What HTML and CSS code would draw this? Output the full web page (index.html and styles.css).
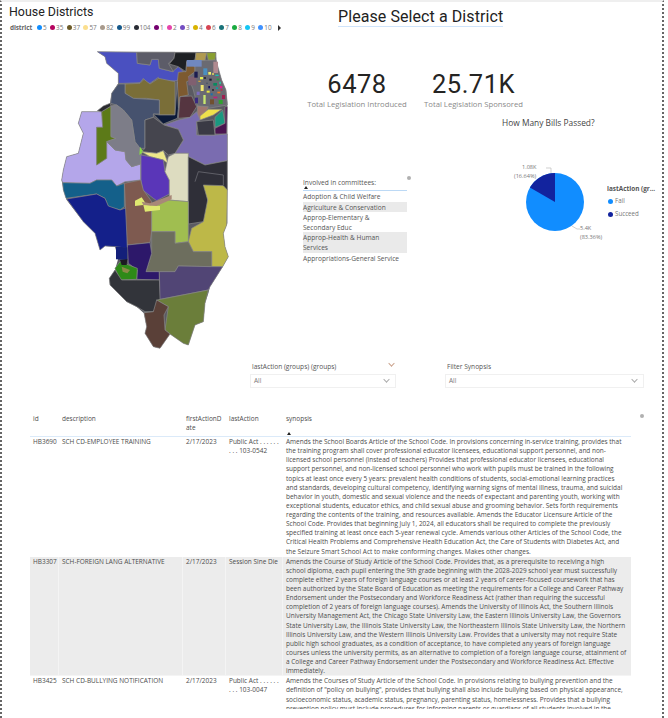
FILE: index.html
```html
<!DOCTYPE html>
<html lang="en">
<head>
<meta charset="utf-8">
<title>House Districts</title>
<link rel="stylesheet" href="styles.css">
</head>
<body>
<div class="report">
  <div class="top">
    <div class="left">
      <h1 class="title">House Districts</h1>
      <div class="legend">
        <b class="legend-name">district</b>
        <span class="lg"><i style="background:#118dff"></i>5</span>
        <span class="lg"><i style="background:#b5045f"></i>35</span>
        <span class="lg"><i style="background:#6b5a28"></i>37</span>
        <span class="lg"><i style="background:#fbdf8e"></i>57</span>
        <span class="lg"><i style="background:#a89a8c"></i>82</span>
        <span class="lg"><i style="background:#15588a"></i>99</span>
        <span class="lg"><i style="background:#2a2d35"></i>104</span>
        <span class="lg"><i style="background:#74006f"></i>1</span>
        <span class="lg"><i style="background:#e645ab"></i>2</span>
        <span class="lg"><i style="background:#744ec2"></i>3</span>
        <span class="lg"><i style="background:#d9b300"></i>4</span>
        <span class="lg"><i style="background:#d64554"></i>6</span>
        <span class="lg"><i style="background:#197278"></i>7</span>
        <span class="lg"><i style="background:#1aab40"></i>8</span>
        <span class="lg"><i style="background:#15c6f4"></i>9</span>
        <span class="lg"><i style="background:#4092ff"></i>10</span>
        <span class="lg-arrow"></span>
      </div>
      <svg class="map" viewBox="0 0 630 960" aria-label="Map of Illinois house districts">
        <polygon fill="#5a5a62" points="172,35 528,36 530,70 545,120 558,150 562,185 562,450 562,550 550,580 555,620 565,650 548,680 510,740 505,760 495,790 490,845 465,855 445,915 430,910 390,882 360,925 340,920 315,880 320,860 312,820 290,800 260,785 210,735 208,715 225,690 235,655 225,620 195,618 180,630 165,580 130,545 80,480 70,450 65,420 70,390 80,350 115,340 130,280 115,250 125,215 180,215 210,190 215,160 235,130 235,100 200,70 195,50"/>
        <g stroke="#8a8a8a" stroke-width="2" stroke-linejoin="round">
          <polygon fill="#4a50c0" points="172,35 290,37 292,70 330,75 335,58 355,58 358,85 398,95 415,80 430,95 412,122 358,125 355,112 330,130 315,128 310,115 300,128 250,130 235,130 235,100 200,70 195,50"/>
          <polygon fill="#5c5c68" points="290,37 405,37 402,55 385,70 400,95 358,85 355,58 335,58 330,75 292,70"/>
          <polygon fill="#1e2024" points="405,38 468,38 465,60 440,65 438,95 415,80 388,72 402,55"/>
          <polygon fill="#b09a50" points="468,38 500,38 495,62 465,62"/>
          <polygon fill="#8aa030" points="500,38 528,38 525,60 505,62"/>
          <polygon fill="#7d5a30" points="440,65 438,95 430,95 415,97 412,125 415,205 420,170 445,165 440,125 465,115 465,80"/>
          <polygon fill="#6a6a72" points="465,62 528,60 545,120 558,150 562,195 505,205 472,198 460,150 445,110 465,95"/>
          <polygon fill="#7a6e38" points="255,132 300,130 312,118 330,132 356,115 405,125 405,225 358,225 358,180 320,175 280,175 255,160"/>
          <polygon fill="#46526e" points="235,132 255,132 255,160 280,175 358,180 358,222 340,222 340,232 315,240 315,325 300,325 285,305 275,240 250,210 230,195 212,190 215,160"/>
          <polygon fill="#0c1a38" points="412,125 415,205 412,235 370,252 340,222 358,225 405,225"/>
          <polygon fill="#553540" points="420,170 455,168 470,200 450,232 415,235"/>
          <polygon fill="#a07870" points="472,198 505,200 495,222 478,240 472,225"/>
          <polygon fill="#efe04c" points="480,228 505,208 545,208 520,225 480,240"/>
          <polygon fill="#1a9880" points="525,232 548,210 555,250 525,262"/>
          <polygon fill="#4a1550" points="555,200 562,200 560,282 525,282 525,265 555,250"/>
          <polygon fill="#7a6cb0" points="372,255 415,240 450,232 470,215 480,240 470,245 470,285 525,285 562,282 562,362 495,375 445,350 445,340 405,340 430,300 415,268"/>
          <polygon fill="#3a3a44" points="470,245 520,240 525,285 475,285"/>
          <polygon fill="#45454e" points="315,240 340,232 372,255 415,268 430,300 405,340 385,345 370,332 350,340 305,335 315,325"/>
          <polygon fill="#b4a6ea" points="125,215 185,215 188,262 170,262 170,375 200,355 200,305 225,330 255,335 258,360 275,380 302,372 302,420 255,425 230,438 215,420 170,420 150,430 68,428 65,420 70,390 80,350 115,340 130,280 115,250"/>
          <polygon fill="#5c7a18" points="185,215 213,198 213,290 228,295 200,305 200,355 170,375 170,262 188,262"/>
          <polygon fill="#7d7d88" points="213,198 230,195 250,210 275,240 285,305 300,325 305,335 302,372 275,380 258,360 255,335 225,330 200,305 228,295 213,290"/>
          <polygon fill="#2a2a30" points="172,212 190,198 210,190 213,198 185,215"/>
          <polygon fill="#88dd44" stroke="none" points="300,320 310,335 298,345"/>
          <polygon fill="#eee88a" points="305,335 350,340 370,332 385,372 370,360 330,350"/>
          <polygon fill="#5a36b8" points="303,345 330,350 370,360 375,395 388,420 388,462 350,482 340,475 308,450 303,420"/>
          <polygon fill="#dddcc0" points="385,350 405,340 445,340 445,485 388,480 388,420 375,395 380,372"/>
          <polygon fill="#2f2f38" points="445,350 495,375 562,362 562,450 500,450 503,480 503,530 490,545 445,552"/>
          <polyline fill="none" stroke="#77777f" points="465,425 475,395 550,405 550,435"/>
          <polygon fill="#bdb848" points="490,435 550,437 562,450 560,555 550,580 555,620 565,650 548,680 515,680 515,635 460,635 445,605 455,565 490,545 503,480"/>
          <polygon fill="#14608a" points="68,428 150,430 170,420 215,420 230,438 253,430 253,500 240,510 205,500 195,475 170,462 78,475 70,450"/>
          <polygon fill="#14208a" points="80,477 170,462 195,475 205,498 240,510 262,502 262,625 228,620 195,618 180,630 165,580 130,545"/>
          <polygon fill="#7e5a50" points="253,430 302,420 310,450 335,485 335,575 330,608 262,615"/>
          <polygon fill="#a0be50" points="335,495 385,480 445,485 445,605 405,610 405,575 335,575"/>
          <polygon fill="#dfe870" stroke="none" points="285,482 305,472 320,495 360,498 360,510 315,515 310,495 285,498"/>
          <polygon fill="#a88878" stroke="none" points="305,485 330,490 370,475 395,465 395,478 350,498 310,495"/>
          <polygon fill="#6d6e5e" points="335,575 405,575 405,610 445,605 460,635 515,635 515,680 415,678 405,695 318,695 335,640"/>
          <polygon fill="#2d186a" points="262,615 330,608 335,640 318,695 358,695 358,720 290,718 292,690 265,670"/>
          <polygon fill="#14207a" stroke="none" points="228,620 262,622 262,660 228,658"/>
          <polygon fill="#2e8a18" points="225,685 240,665 292,685 290,718 240,720"/>
          <polygon fill="#8a8a48" stroke="none" points="245,680 270,690 262,700 248,695"/>
          <polygon fill="#1c1c22" stroke="none" points="240,660 262,658 260,675 245,675"/>
          <polygon fill="#32343a" points="208,715 225,690 245,720 290,720 358,720 362,775 340,815 315,815 290,800 260,785 210,735"/>
          <polygon fill="#514575" points="358,695 405,695 415,678 515,680 548,680 510,740 505,750 360,778"/>
          <polygon fill="#6b7e3a" points="362,778 505,750 495,790 490,845 465,855 445,915 430,910 390,882 375,870 385,800 350,780"/>
          <polygon fill="#5a4038" points="350,780 385,800 372,825 375,870 390,882 360,925 340,920 315,880 320,860 312,818 340,815"/>
        </g>
        <g>
          <rect x="440" y="60" width="45" height="20" fill="#7088c0"/><rect x="445" y="110" width="24" height="26" fill="#806070"/>
          <rect x="520" y="65" width="14" height="34" fill="#b08a90"/><rect x="490" y="85" width="12" height="20" fill="#4a90c0"/>
          <rect x="463" y="95" width="10" height="18" fill="#1c1c50"/><rect x="505" y="96" width="8" height="8" fill="#eef06a"/>
          <rect x="516" y="100" width="6" height="4" fill="#f2e860"/><rect x="526" y="104" width="10" height="4" fill="#1ac0b0"/>
          <rect x="480" y="111" width="9" height="7" fill="#e8f050"/><rect x="492" y="112" width="6" height="4" fill="#101828"/>
          <rect x="508" y="116" width="7" height="6" fill="#181830"/><rect x="530" y="116" width="8" height="5" fill="#20a040"/>
          <rect x="520" y="129" width="11" height="8" fill="#0a8a60"/><rect x="540" y="138" width="7" height="7" fill="#e02090"/>
          <rect x="482" y="135" width="9" height="18" fill="#f2e870"/><rect x="505" y="138" width="5" height="7" fill="#101060"/>
          <rect x="500" y="152" width="9" height="6" fill="#e8e840"/><rect x="532" y="155" width="9" height="5" fill="#f07820"/>
          <rect x="470" y="155" width="9" height="10" fill="#7a6ac0"/><rect x="546" y="165" width="9" height="12" fill="#a02050"/>
          <rect x="490" y="165" width="7" height="27" fill="#c8e870"/><rect x="520" y="170" width="12" height="5" fill="#c0207a"/>
          <rect x="465" y="173" width="9" height="17" fill="#3a2a80"/><rect x="510" y="178" width="12" height="15" fill="#705030"/>
          <rect x="536" y="180" width="12" height="12" fill="#30a030"/><rect x="512" y="160" width="6" height="6" fill="#1a70b0"/>
          <rect x="528" y="142" width="6" height="5" fill="#0aa0a0"/><rect x="516" y="148" width="6" height="4" fill="#1d1d24"/>
          <rect x="538" y="125" width="5" height="7" fill="#30c0a0"/><rect x="475" y="122" width="7" height="4" fill="#d0a040"/>
          <rect x="498" y="128" width="6" height="4" fill="#505868"/><rect x="542" y="148" width="5" height="4" fill="#d02040"/>
        </g>
      </svg>
    </div>
    <div class="right">
      <div class="heading"><span class="heading-text">Please Select a District</span></div>
      <div class="kpis">
        <div class="kpi kpi-a"><div class="kpi-value">6478</div><div class="kpi-label">Total Legislation Introduced</div></div>
        <div class="kpi kpi-b"><div class="kpi-value">25.71K</div><div class="kpi-label">Total Legislation Sponsored</div></div>
      </div>
      <div class="pie-title">How Many Bills Passed?</div>
      <div class="mid">
        <div class="committees">
          <div class="cm-head">Involved in committees:<span class="sort"></span></div>
          <div class="cm-row">Adoption &amp; Child Welfare</div>
          <div class="cm-row alt">Agriculture &amp; Conservation</div>
          <div class="cm-row">Approp-Elementary &amp;<br>Secondary Educ</div>
          <div class="cm-row alt">Approp-Health &amp; Human<br>Services</div>
          <div class="cm-row">Appropriations-General Service</div>
          <span class="handle"></span>
        </div>
        <div class="pie">
          <svg class="pie-svg" viewBox="0 0 110 90" aria-label="Pie chart of bills passed">
            <circle cx="49" cy="47" r="29" fill="#118dff"/>
            <path d="M49 47V18A29 29 0 0 0 23.9 32.5Z" fill="#12239e"/>
            <path d="M40 13H45V18M66 71L71 74H74" fill="none" stroke="#bbb" stroke-width=".7"/>
            <text x="16" y="14" class="pie-label">1.08K</text>
            <text x="8" y="23" class="pie-label">(16.64%)</text>
            <text x="74" y="75" class="pie-label">5.4K</text>
            <text x="74" y="84" class="pie-label">(83.36%)</text>
          </svg>
          <div class="pie-legend">
            <div class="pl-title">lastAction (gr...</div>
            <div class="pl-item"><i class="pl-fail"></i>Fail</div>
            <div class="pl-item"><i class="pl-succ"></i>Succeed</div>
          </div>
        </div>
      </div>
    </div>
  </div>
  <div class="filters">
    <div class="filter filter-a">
      <div class="f-label">lastAction (groups) (groups)<span class="chev chev-top"></span></div>
      <div class="f-box">All<span class="chev"></span></div>
    </div>
    <div class="filter filter-b">
      <div class="f-label">Filter Synopsis</div>
      <div class="f-box">All<span class="chev"></span></div>
    </div>
  </div>
  <div class="table">
    <span class="handle handle-t"></span>
    <div class="row head">
      <div>id</div><div>description</div><div>firstActionD<br>ate</div><div>lastAction</div><div>synopsis<span class="sort"></span></div>
    </div>
    <div class="row">
      <div>HB3690</div><div>SCH CD-EMPLOYEE TRAINING</div><div>2/17/2023</div><div>Public Act . . . . . .<br>. . . 103-0542</div>
      <div>Amends the School Boards Article of the School Code. In provisions concerning in-service training, provides that<br>the training program shall cover professional educator licensees, educational support personnel, and non-<br>licensed school personnel (instead of teachers) Provides that professional educator licensees, educational<br>support personnel, and non-licensed school personnel who work with pupils must be trained in the following<br>topics at least once every 5 years: prevalent health conditions of students, social-emotional learning practices<br>and standards, developing cultural competency, identifying warning signs of mental illness, trauma, and suicidal<br>behavior in youth, domestic and sexual violence and the needs of expectant and parenting youth, working with<br>exceptional students, educator ethics, and child sexual abuse and grooming behavior. Sets forth requirements<br>regarding the contents of the training, and resources available. Amends the Educator Licensure Article of the<br>School Code. Provides that beginning July 1, 2024, all educators shall be required to complete the previously<br>specified training at least once each 5-year renewal cycle. Amends various other Articles of the School Code, the<br>Critical Health Problems and Comprehensive Health Education Act, the Care of Students with Diabetes Act, and<br>the Seizure Smart School Act to make conforming changes. Makes other changes.</div>
    </div>
    <div class="row alt">
      <div>HB3307</div><div>SCH-FOREIGN LANG ALTERNATIVE</div><div>2/17/2023</div><div>Session Sine Die</div>
      <div>Amends the Course of Study Article of the School Code. Provides that, as a prerequisite to receiving a high<br>school diploma, each pupil entering the 9th grade beginning with the 2028-2029 school year must successfully<br>complete either 2 years of foreign language courses or at least 2 years of career-focused coursework that has<br>been authorized by the State Board of Education as meeting the requirements for a College and Career Pathway<br>Endorsement under the Postsecondary and Workforce Readiness Act (rather than requiring the successful<br>completion of 2 years of foreign language courses). Amends the University of Illinois Act, the Southern Illinois<br>University Management Act, the Chicago State University Law, the Eastern Illinois University Law, the Governors<br>State University Law, the Illinois State University Law, the Northeastern Illinois State University Law, the Northern<br>Illinois University Law, and the Western Illinois University Law. Provides that a university may not require State<br>public high school graduates, as a condition of acceptance, to have completed any years of foreign language<br>courses unless the university permits, as an alternative to completion of a foreign language course, attainment of<br>a College and Career Pathway Endorsement under the Postsecondary and Workforce Readiness Act. Effective<br>immediately.</div>
    </div>
    <div class="row last">
      <div>HB3425</div><div>SCH CD-BULLYING NOTIFICATION</div><div>2/17/2023</div><div>Public Act . . . . . .<br>. . . 103-0047</div>
      <div>Amends the Courses of Study Article of the School Code. In provisions relating to bullying prevention and the<br>definition of "policy on bullying", provides that bullying shall also include bullying based on physical appearance,<br>socioeconomic status, academic status, pregnancy, parenting status, homelessness. Provides that a bullying<br>prevention policy must include procedures for informing parents or guardians of all students involved in the</div>
    </div>
  </div>
</div>
</body>
</html>
```
FILE: styles.css
```css
* { box-sizing: border-box; }
html, body { margin: 0; padding: 0; background: #fff; }
body { width: 668px; height: 718px; overflow: hidden; font-family: "Open Sans", "Noto Sans", sans-serif; color: #444; }

.report {
  width: 664px;
  height: 718px;
  overflow: hidden;
  border-left: 2px dotted #666;
  border-right: 2px dotted #666;
  border-top: 2px solid #efefef;
  position: relative;
}

.top { display: grid; grid-template-columns: 294px 1fr; height: 358px; }
.left { padding-left: 7px; }
.title { margin: 1px 0 0; font: 400 12.4px/18px Roboto, sans-serif; color: #222; }
.legend { display: flex; align-items: center; height: 9px; margin-top: 2px; font-size: 6.4px; line-height: 9px; color: #777; white-space: nowrap; }
.legend-name { font-weight: 700; color: #666; width: 27px; margin-left: 1px; letter-spacing: -.1px; }
.lg { display: flex; align-items: center; gap: 1px; margin-right: 3.4px; }
.lg i { width: 5px; height: 5px; border-radius: 50%; flex: none; }
.lg-arrow { width: 0; height: 0; border-left: 3px solid #333; border-top: 3px solid transparent; border-bottom: 3px solid transparent; margin-left: 3px; }
.map { display: block; width: 210px; height: 320px; margin: 8px 0 0 31px; }

.heading { padding: 3px 0 0 42px; height: 26px; }
.heading-text { display: inline-block; font: 400 16px/19px Roboto, sans-serif; color: #222; border-bottom: 1px solid #cfe4fb; letter-spacing: .08px; }
.kpis { display: flex; margin-top: 43px; padding-left: 10px; gap: 15px; }
.kpi { width: 102px; text-align: center; }
.kpi-b { width: 101px; }
.kpi-value { font: 400 25.5px/26px Roboto, sans-serif; color: #252423; letter-spacing: .5px; }
.kpi-label { font-size: 7.7px; line-height: 9px; color: #8a8a8a; margin-top: 3px; white-space: nowrap; }
.pie-title { margin: 9px 0 0 206px; font-size: 8.4px; line-height: 10px; color: #444; font-weight: 500; white-space: nowrap; }

.mid { display: flex; margin-top: 19px; }
.committees { position: relative; width: 104px; margin-left: 7px; margin-top: 30px; flex: none; }
.cm-head { position: relative; height: 14px; font-size: 6.6px; line-height: 9px; border-bottom: 1px solid #bcd9f5; color: #555; padding-top: 1px; }
.sort { position: absolute; left: 1px; bottom: 1px; width: 0; height: 0; border-left: 2px solid transparent; border-right: 2px solid transparent; border-bottom: 3px solid #222; }
.cm-row { font-size: 6.6px; line-height: 9.6px; color: #555; padding: 1px 0 0; white-space: nowrap; min-height: 10.6px; }
.cm-row.alt { background: #eaeaea; }
.handle { position: absolute; right: -4px; top: -1px; width: 4px; height: 4px; border-radius: 50%; background: #b0b0b0; }
.pie { display: flex; margin-left: 105px; margin-top: 8px; height: 90px; }
.pie-svg { display: block; width: 110px; height: 90px; flex: none; margin-left: -6px; }
.pie-label { font-family: "Open Sans", sans-serif; font-size: 5.6px; fill: #777; }
.pie-legend { margin: 29px 0 0 -9px; width: 60px; overflow: hidden; flex: none; }
.pl-title { font-size: 6.4px; line-height: 9px; font-weight: 700; color: #555; white-space: nowrap; }
.pl-item { display: flex; align-items: center; gap: 2px; font-size: 6.2px; line-height: 10px; color: #777; margin: 3px 0 3px 1px; }
.pl-item i { width: 5px; height: 5px; border-radius: 50%; }
.pl-fail { background: #118dff; }
.pl-succ { background: #12239e; }

.filters { display: flex; height: 54px; padding: 2px 0 0 248px; gap: 49px; }
.filter-a { width: 146px; }
.filter-b { width: 199px; }
.f-label { position: relative; font-size: 6.6px; line-height: 9px; font-weight: 500; color: #555; padding-left: 2px; margin-bottom: 3px; }
.f-box { position: relative; height: 14px; border: 1px solid #f0f0f0; font-size: 6.5px; line-height: 11px; color: #777; padding-left: 3px; }
.chev { position: absolute; right: 6px; top: 2px; width: 5px; height: 5px; border-right: 1px solid #aaa; border-bottom: 1px solid #aaa; transform: rotate(45deg) scale(.9, .9); }
.chev-top { right: 2px; top: -1px; border-color: #c9a08a; }

.table { position: relative; margin-left: 28px; width: 601px; }
.handle-t { right: -13px; top: 0; }
.row { display: grid; grid-template-columns: 28px 123px 42px 56px 1fr; column-gap: 1px; font-size: 6.48px; line-height: 9.13px; color: #4c4c4c; padding-bottom: 1px; }
.row > div { padding-left: 3px; white-space: nowrap; }
.row.alt { background: #f4f4f4; }
.row.alt > div { background: #ececec; }
.row.head { height: 23px; border-bottom: 1px solid #dbeaf9; padding: 0; }
.row.head > div { position: relative; }
.row.head .sort { left: 4px; bottom: 1px; }
.row.last { height: 33px; overflow: hidden; }
```
